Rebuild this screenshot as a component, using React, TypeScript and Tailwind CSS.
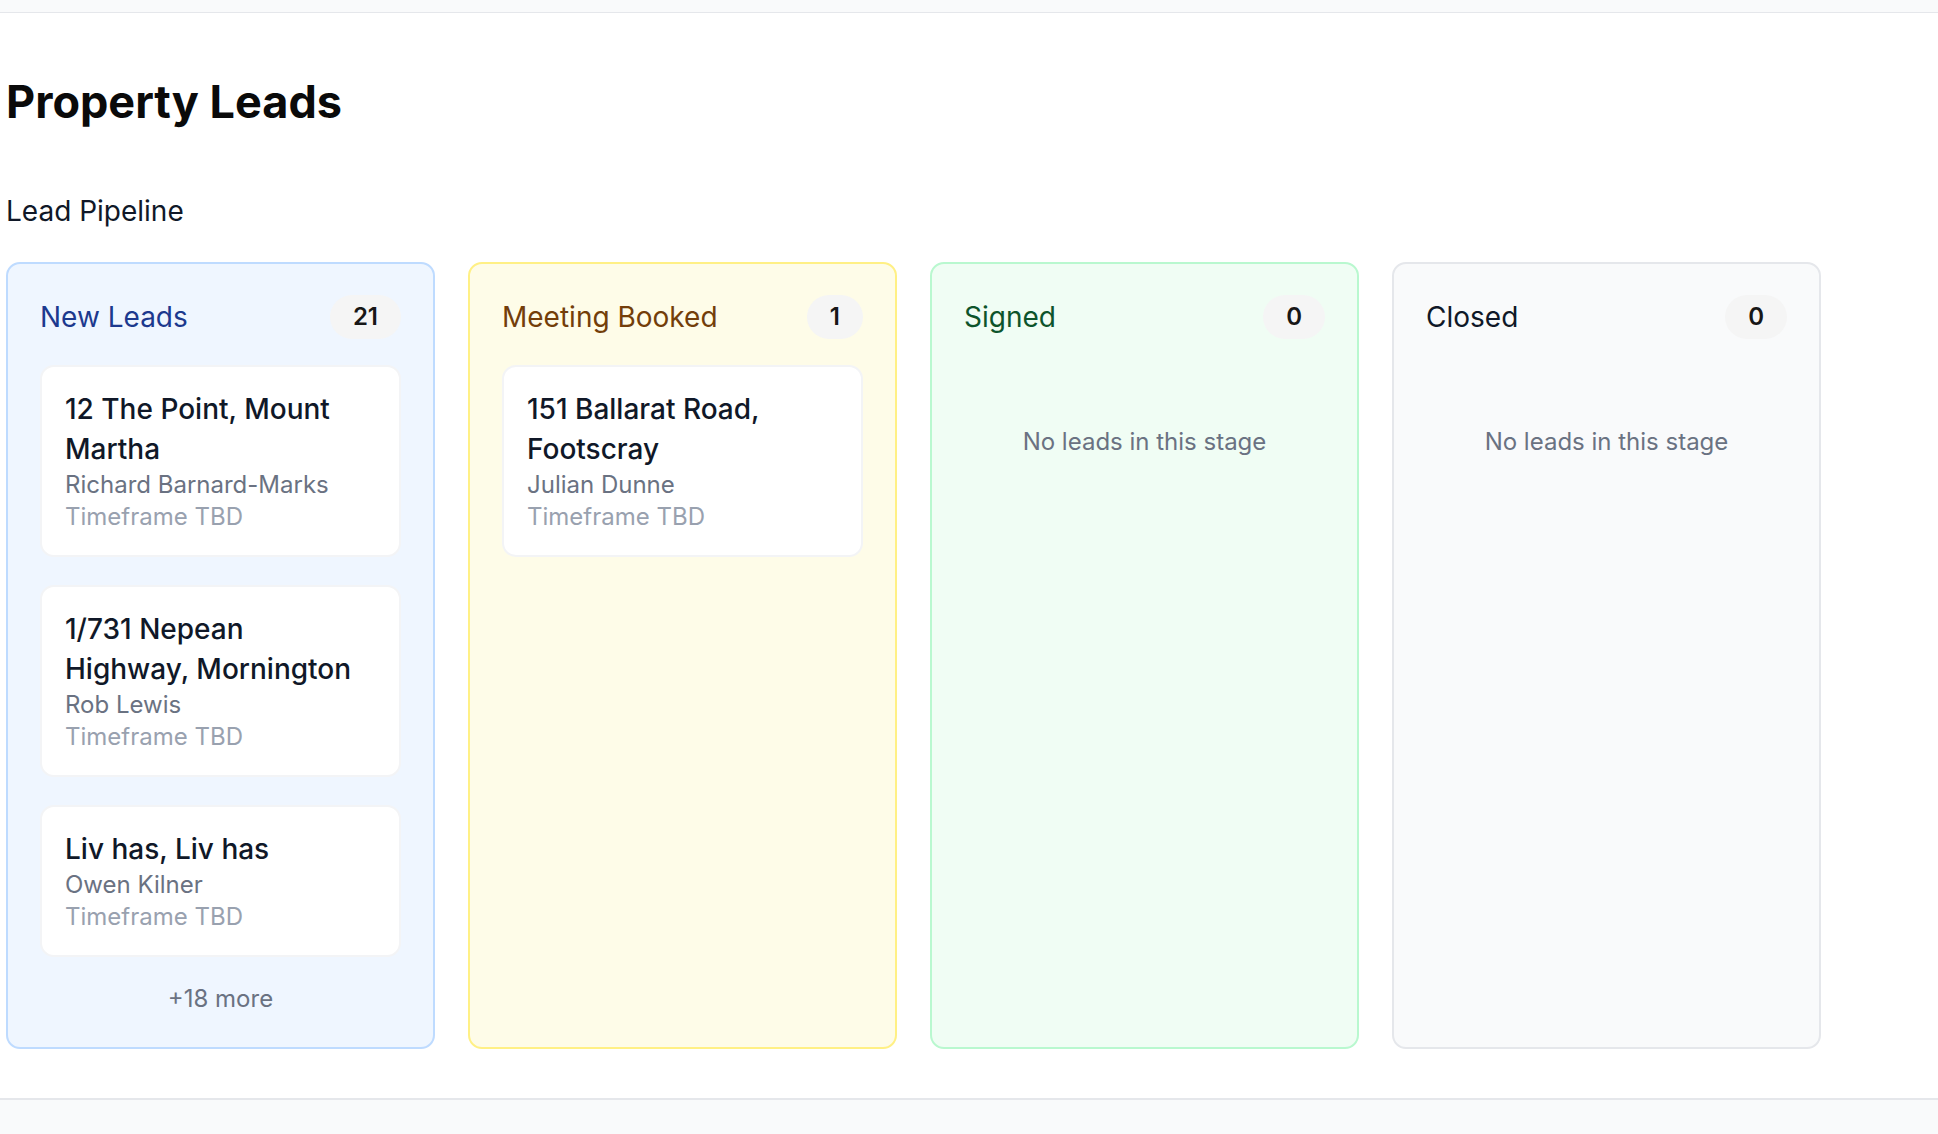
type Lead = {
  address: string;
  contact: string;
  timeframe: string;
};

type Stage = {
  name: string;
  count: number;
  leads: Lead[];
  more?: number;
  box: string;
  title: string;
};

const stages: Stage[] = [
  {
    name: "New Leads",
    count: 21,
    leads: [
      { address: "12 The Point, Mount Martha", contact: "Richard Barnard-Marks", timeframe: "Timeframe TBD" },
      { address: "1/731 Nepean Highway, Mornington", contact: "Rob Lewis", timeframe: "Timeframe TBD" },
      { address: "Liv has, Liv has", contact: "Owen Kilner", timeframe: "Timeframe TBD" },
    ],
    more: 18,
    box: "bg-blue-50 border-blue-200",
    title: "text-blue-900",
  },
  {
    name: "Meeting Booked",
    count: 1,
    leads: [{ address: "151 Ballarat Road, Footscray", contact: "Julian Dunne", timeframe: "Timeframe TBD" }],
    box: "bg-yellow-50 border-yellow-200",
    title: "text-yellow-900",
  },
  {
    name: "Signed",
    count: 0,
    leads: [],
    box: "bg-green-50 border-green-200",
    title: "text-green-900",
  },
  {
    name: "Closed",
    count: 0,
    leads: [],
    box: "bg-gray-50 border-gray-200",
    title: "text-gray-900",
  },
];

function LeadCard({ lead }: { lead: Lead }) {
  return (
    <div className="rounded-[14px] border-2 border-gray-100 bg-white px-[23px] py-[22px]">
      <div className="pr-[10px] text-[28px] leading-[40px] font-medium text-gray-900">{lead.address}</div>
      <div className="text-[24px] leading-[32px] text-gray-500">{lead.contact}</div>
      <div className="text-[24px] leading-[32px] text-gray-400">{lead.timeframe}</div>
    </div>
  );
}

function StageColumn({ stage }: { stage: Stage }) {
  return (
    <div className={`w-[429px] shrink-0 rounded-[14px] border-2 px-[32px] pt-[31px] pb-[32px] ${stage.box}`}>
      <div className="flex h-[44px] items-center justify-between mb-[26px]">
        <h3 className={`text-[28px] leading-[36px] font-normal ${stage.title}`}>{stage.name}</h3>
        <span className="rounded-full bg-neutral-100 px-[23px] py-[6px] text-[24px] leading-[32px] font-semibold text-neutral-900">
          {stage.count}
        </span>
      </div>
      {stage.leads.length === 0 ? (
        <p className="pt-[61px] text-center text-[24px] leading-[32px] text-gray-500">No leads in this stage</p>
      ) : (
        <div className="flex flex-col gap-[28px]">
          {stage.leads.map((lead, index) => (
            <LeadCard key={index} lead={lead} />
          ))}
        </div>
      )}
      {stage.more ? (
        <p className="mt-[26px] text-center text-[24px] leading-[32px] text-gray-500">+{stage.more} more</p>
      ) : null}
    </div>
  );
}

export default function App() {
  return (
    <div className="min-h-screen bg-gray-50 font-['Inter','Noto_Sans',sans-serif]">
      <div className="h-[13px] bg-gray-50 border-b border-gray-200" />
      <main className="bg-white pl-[6px] pt-[62px] pb-[49px] border-b-2 border-gray-200">
        <h1 className="text-[45px] leading-[54px] font-bold text-neutral-950">Property Leads</h1>
        <h2 className="mt-[64px] text-[28px] leading-[36px] font-normal text-gray-900">Lead Pipeline</h2>
        <div className="mt-[33px] flex items-stretch gap-[33px]">
          {stages.map((stage) => (
            <StageColumn key={stage.name} stage={stage} />
          ))}
        </div>
      </main>
    </div>
  );
}
